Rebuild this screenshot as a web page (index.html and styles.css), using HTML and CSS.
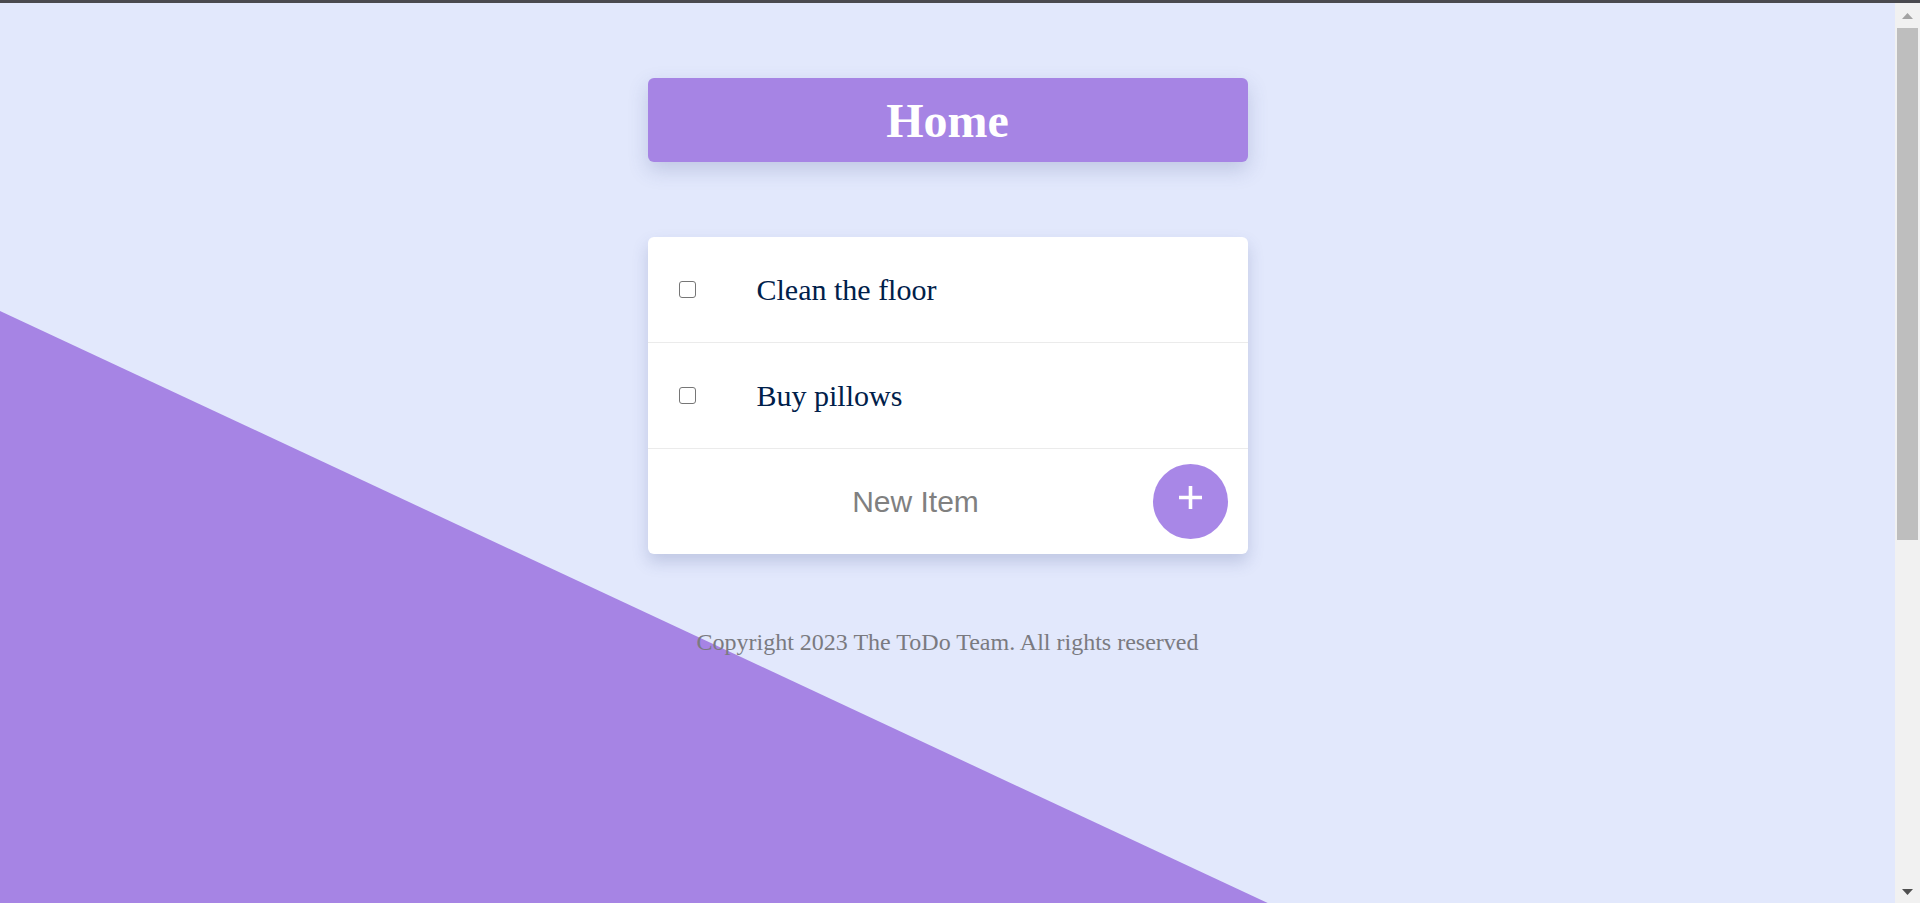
FILE: index.html
```html
<!DOCTYPE html>
<html lang="en">
<head>
<meta charset="utf-8">
<title>ToDo</title>
<link rel="stylesheet" href="styles.css">
</head>
<body>
<div class="viewport">
  <main class="page">
    <header class="heading">
      <h1 class="heading-title">Home</h1>
    </header>
    <section class="card">
      <div class="item">
        <input type="checkbox" class="item-check">
        <p class="item-text">Clean the floor</p>
      </div>
      <div class="item">
        <input type="checkbox" class="item-check">
        <p class="item-text">Buy pillows</p>
      </div>
      <form class="item item-new">
        <input type="text" class="new-input" placeholder="New Item">
        <button type="button" class="add-btn" aria-label="Add">
          <svg class="add-icon" width="23" height="23" viewBox="0 0 23 23"><path d="M11.5 0V23M0 11.5H23" stroke="#ffffff" stroke-width="3.6" fill="none"/></svg>
        </button>
      </form>
    </section>
    <footer class="footer">
      <p class="copyright">Copyright 2023 The ToDo Team. All rights reserved</p>
    </footer>
  </main>
</div>
<aside class="scrollbar" aria-hidden="true">
  <div class="sb-btn"><svg width="11" height="6" viewBox="0 0 11 6"><path d="M5.5 0L11 6H0Z" fill="#a3a3a3"/></svg></div>
  <div class="sb-track"><div class="sb-thumb"></div></div>
  <div class="sb-btn sb-btn-down"><svg width="11" height="6" viewBox="0 0 11 6"><path d="M0 0H11L5.5 6Z" fill="#505050"/></svg></div>
</aside>
</body>
</html>
```
FILE: styles.css
```css
html {
  background: #e2e8fc;
  border-top: 3px solid #4a4a4f;
}
body {
  margin: 0;
  display: flex;
  align-items: flex-start;
  font-family: "Liberation Serif", "Times New Roman", serif;
}
.viewport {
  flex: 1;
  min-width: 0;
  min-height: 1501px;
  position: relative;
}
.viewport::before {
  content: "";
  position: absolute;
  left: 0;
  top: 0;
  width: 100%;
  height: 100%;
  background: #a684e4;
  clip-path: polygon(0 308px, 1895px 1193px, 1895px 100%, 0 100%);
  z-index: -1;
}
.scrollbar {
  width: 25px;
  height: 900px;
  flex: none;
  background: #f1f1f1;
  display: flex;
  flex-direction: column;
}
.sb-btn {
  height: 25px;
  flex: none;
  display: flex;
  align-items: center;
  justify-content: center;
}
.sb-btn svg {
  display: block;
}
.sb-btn-down {
  padding-top: 3px;
  box-sizing: border-box;
}
.sb-track {
  flex: 1;
  padding: 0 2px;
}
.sb-thumb {
  height: 512px;
  background: #bebebe;
}
.page {
  width: 600px;
  margin: 0 auto;
  padding-top: 75px;
  display: flex;
  flex-direction: column;
}
.heading {
  height: 84px;
  background: #a684e4;
  border-radius: 6px;
  box-shadow: 0 8px 20px rgba(70, 80, 140, 0.22);
  display: flex;
  align-items: center;
  justify-content: center;
}
.heading-title {
  margin: 0;
  color: #ffffff;
  font-size: 48px;
  font-weight: bold;
  font-family: "Liberation Serif", "Times New Roman", serif;
}
.card {
  margin-top: 75px;
  background: #ffffff;
  border-radius: 6px;
  box-shadow: 0 8px 16px rgba(70, 80, 140, 0.22);
  display: flex;
  flex-direction: column;
}
.item {
  height: 105px;
  display: flex;
  align-items: center;
  padding-left: 31px;
  border-bottom: 1px solid #ebebeb;
}
.item-new {
  border-bottom: none;
  margin: 0;
  padding-right: 20px;
}
.item-check {
  appearance: none;
  -webkit-appearance: none;
  width: 17px;
  height: 17px;
  margin: 0;
  border: 1.5px solid #767676;
  border-radius: 3px;
  background: #ffffff;
  box-sizing: border-box;
  flex: none;
}
.item-text {
  margin: 0 0 0 61px;
  font-size: 30px;
  color: #00204a;
}
.new-input {
  flex: 1;
  min-width: 0;
  border: none;
  outline: none;
  background: transparent;
  text-align: center;
  font-family: "Liberation Sans", Arial, sans-serif;
  font-size: 30px;
  color: #333333;
  padding: 0;
}
.new-input::placeholder {
  color: #808080;
}
.add-btn {
  width: 75px;
  height: 75px;
  border-radius: 50%;
  border: none;
  background: #a887e7;
  padding: 0 0 9px 0;
  display: flex;
  align-items: center;
  justify-content: center;
  flex: none;
}
.add-icon {
  display: block;
}
.footer {
  margin-top: 75px;
  display: flex;
  justify-content: center;
}
.copyright {
  margin: 0;
  font-size: 24px;
  color: #7a7a80;
}
```
